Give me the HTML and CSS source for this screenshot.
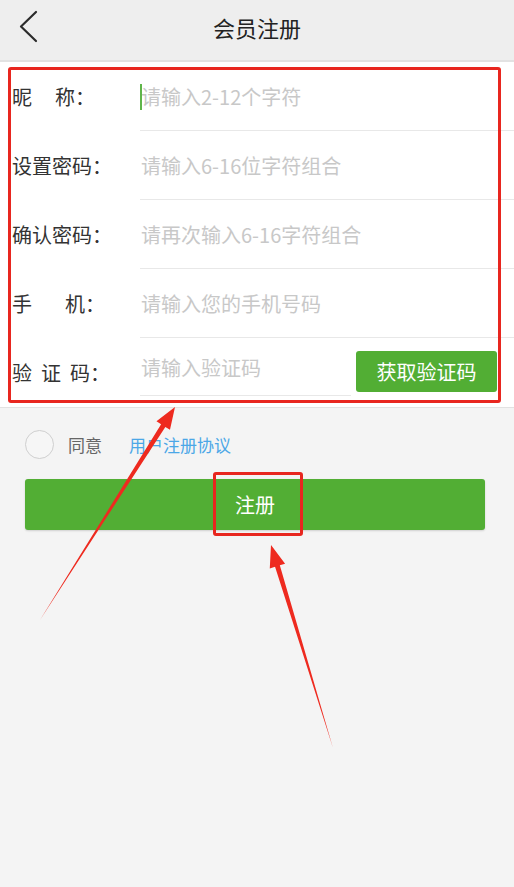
FILE: index.html
```html
<!DOCTYPE html>
<html lang="zh-CN">
<head>
<meta charset="utf-8">
<title>会员注册</title>
<link rel="stylesheet" href="styles.css">
</head>
<body>
<div class="page">
  <header class="topbar">
    <svg class="back" width="24" height="34" viewBox="0 0 24 34"><polyline points="18,2 3,16.5 18,31" fill="none" stroke="#2b2b2b" stroke-width="2.2" stroke-linecap="round" stroke-linejoin="round"/></svg>
    <h1 class="title">会员注册</h1>
  </header>

  <section class="form">
    <div class="row">
      <div class="label"><span class="sp-nick">昵</span>称：</div>
      <div class="field field-cursor">请输入2-12个字符</div>
    </div>
    <div class="row">
      <div class="label">设置密码：</div>
      <div class="field">请输入6-16位字符组合</div>
    </div>
    <div class="row">
      <div class="label">确认密码：</div>
      <div class="field">请再次输入6-16字符组合</div>
    </div>
    <div class="row">
      <div class="label"><span class="sp-phone">手</span>机：</div>
      <div class="field">请输入您的手机号码</div>
    </div>
    <div class="row row-code">
      <div class="label"><span class="sp-code">验</span><span class="sp-code">证</span>码：</div>
      <div class="field field-code">请输入验证码</div>
      <button class="code-btn">获取验证码</button>
    </div>
  </section>

  <div class="agree">
    <span class="check"></span>
    <span class="agree-text">同意</span>
    <span class="agree-link">用户注册协议</span>
  </div>

  <button class="submit">注册</button>

  <div class="annot">
    <div class="hl hl-form"></div>
    <div class="hl hl-btn"></div>
    <svg class="arrows" width="514" height="887" viewBox="0 0 514 887">
      <polygon fill="#ee2a1f" points="40,620 161.11,424.24 156.46,421.30 175,407 169.98,429.86 165.33,426.92"/>
      <polygon fill="#ee2a1f" points="333,748 279.82,565.31 285.08,563.70 271,545 269.78,568.38 275.04,566.77"/>
    </svg>
  </div>
</div>
</body>
</html>
```

FILE: styles.css
```css
* { box-sizing: border-box; }
html, body {
  margin: 0;
  padding: 0;
  background: #f4f4f4;
  font-family: "Noto Sans CJK SC", "Noto Sans", sans-serif;
}
.page {
  position: relative;
  width: 514px;
  min-height: 887px;
  background: #f4f4f4;
}
.topbar {
  height: 62px;
  background: #eeeeee;
  border-bottom: 2px solid #e2e2e2;
  display: flex;
  align-items: center;
  justify-content: center;
  position: relative;
}
.back {
  position: absolute;
  left: 18px;
  top: 10px;
}
.title {
  margin: 0;
  font-size: 22px;
  font-weight: normal;
  color: #222;
  line-height: 1;
  margin-top: -6px;
}
.form {
  background: #fff;
  border-bottom: 1px solid #e2e2e2;
}
.row {
  display: flex;
  align-items: center;
  height: 69px;
}
.label {
  width: 140px;
  padding-left: 12px;
  font-size: 20px;
  color: #333;
  white-space: nowrap;
  flex-shrink: 0;
}
.sp-nick { margin-right: 23px; }
.sp-phone { margin-right: 33px; }
.sp-code { margin-right: 9px; }
.field {
  flex: 1;
  height: 100%;
  display: flex;
  align-items: center;
  padding-left: 1px;
  font-size: 20px;
  color: #c8c8c8;
  border-bottom: 1px solid #e8e8e8;
  position: relative;
}
.field-cursor::before {
  content: "";
  position: absolute;
  left: 0;
  top: 22px;
  width: 2px;
  height: 26px;
  background: #5fb54a;
}
.field-code {
  flex: 0 0 211px;
  height: 58px;
  align-self: flex-start;
  padding-top: 2px;
}
.code-btn {
  margin-left: 5px;
  width: 141px;
  height: 41px;
  background: #52ae34;
  border: none;
  border-radius: 3px;
  color: #fff;
  font-family: inherit;
  font-size: 20px;
  padding: 0;
  margin-top: -2px;
}
.agree {
  display: flex;
  align-items: center;
  margin: 22px 0 0 25px;
  height: 28px;
}
.check {
  width: 29px;
  height: 29px;
  border: 1.5px solid #cfcfcf;
  border-radius: 50%;
  background: #f6f6f6;
}
.agree-text {
  margin-left: 14px;
  font-size: 17px;
  color: #666;
}
.agree-link {
  margin-left: 27px;
  font-size: 17px;
  color: #4ba7e7;
}
.submit {
  display: block;
  margin: 21px 0 0 25px;
  width: 460px;
  height: 51px;
  background: #52ae34;
  border: none;
  border-radius: 3px;
  box-shadow: 0 1px 2px rgba(0,0,0,0.15);
  color: #fff;
  font-family: inherit;
  font-size: 20px;
  padding: 0;
}
.annot {
  position: absolute;
  left: 0;
  top: 0;
  width: 514px;
  height: 887px;
  pointer-events: none;
}
.hl {
  position: absolute;
  border: 3px solid #e8261f;
  border-radius: 3px;
}
.hl-form {
  left: 8px;
  top: 67px;
  width: 493px;
  height: 336px;
}
.hl-btn {
  left: 213px;
  top: 472px;
  width: 90px;
  height: 64px;
}
.arrows {
  position: absolute;
  left: 0;
  top: 0;
}
```
